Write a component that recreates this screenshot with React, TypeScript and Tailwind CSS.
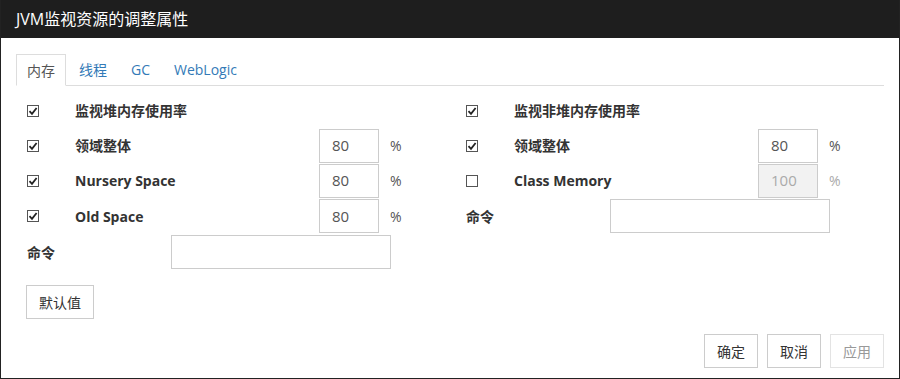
import type { ReactNode } from 'react';

const FONT = { fontFamily: '"Segoe UI", "Open Sans", "Noto Sans CJK SC", sans-serif' };

function Check({ checked }: { checked: boolean }) {
  return (
    <span className="w-[12px] h-[12px] border border-[#555] bg-white flex items-center justify-center shrink-0">
      {checked && (
        <svg width="10" height="10" viewBox="0 0 10 10">
          <path d="M1.5 5.2 L4 7.8 L8.6 2" fill="none" stroke="#222" strokeWidth="1.8" />
        </svg>
      )}
    </span>
  );
}

function NumInput({ value, disabled }: { value: string; disabled?: boolean }) {
  return (
    <div
      className={`w-[60px] h-[34px] border border-[#ccc] flex items-center pl-[12px] text-[15px] ${
        disabled ? 'bg-[#f2f2f2] text-[#aaa]' : 'bg-white text-[#555]'
      }`}
    >
      {value}
    </div>
  );
}

function Row({ h, children }: { h: string; children: ReactNode }) {
  return <div className={`flex items-center ${h}`}>{children}</div>;
}

function CheckRow({ label, checked, value, disabled, h = 'h-[35px]' }: {
  label: string; checked: boolean; value?: string; disabled?: boolean; h?: string;
}) {
  return (
    <Row h={h}>
      <div className="w-[49px] flex items-center pl-[1px]"><Check checked={checked} /></div>
      <span className="w-[244px] text-[14px] font-bold text-[#333]">{label}</span>
      {value && (
        <>
          <NumInput value={value} disabled={disabled} />
          <span className={`ml-[11px] text-[14px] ${disabled ? 'text-[#aaa]' : 'text-[#555]'}`}>%</span>
        </>
      )}
    </Row>
  );
}

function CmdRow({ h = 'h-[36px]' }: { h?: string }) {
  return (
    <Row h={h}>
      <span className="w-[145px] pl-[1px] text-[14px] font-bold text-[#333]">命令</span>
      <div className="w-[220px] h-[34px] border border-[#ccc] bg-white" />
    </Row>
  );
}

const TABS = ['内存', '线程', 'GC', 'WebLogic'];

export default function App() {
  return (
    <div className="w-[900px] h-[379px] bg-white border border-[#222] border-t-0 flex flex-col" style={FONT}>
      {/* Title bar */}
      <div className="h-[38px] bg-[#1e1e1e] text-white text-[16px] flex items-center pl-[15px] shrink-0">
        JVM监视资源的调整属性
      </div>

      <div className="flex-1 flex flex-col px-[15px] pt-[16px] pb-[10px]">
        {/* Tabs */}
        <div className="flex h-[32px] border-b border-[#ddd]">
          {TABS.map((t, i) => (
            <div
              key={t}
              className={`mr-[2px] px-[10px] flex items-center text-[14px] ${
                i === 0
                  ? 'border border-[#ddd] border-b-white bg-white text-[#555] -mb-[1px] w-[50px] justify-center'
                  : 'text-[#337ab7] border border-transparent'
              }`}
            >
              {t}
            </div>
          ))}
        </div>

        {/* Content */}
        <div className="grid grid-cols-2 pl-[10px] mt-[7px]">
          <div className="flex flex-col">
            <CheckRow label="监视堆内存使用率" checked />
            <CheckRow label="领域整体" checked value="80" />
            <CheckRow label="Nursery Space" checked value="80" />
            <CheckRow label="Old Space" checked value="80" h="h-[36px]" />
            <CmdRow />
          </div>
          <div className="flex flex-col pl-[10px]">
            <CheckRow label="监视非堆内存使用率" checked />
            <CheckRow label="领域整体" checked value="80" />
            <CheckRow label="Class Memory" checked={false} value="100" disabled />
            <CmdRow />
          </div>
        </div>

        <div className="pl-[10px] mt-[15px]">
          <button className="h-[34px] w-[68px] border border-[#ccc] bg-white text-[14px] text-[#333]">默认值</button>
        </div>

        <div className="mt-auto flex justify-end gap-[9px]">
          <button className="h-[34px] w-[54px] border border-[#ccc] bg-white text-[14px] text-[#333]">确定</button>
          <button className="h-[34px] w-[54px] border border-[#ccc] bg-white text-[14px] text-[#333]">取消</button>
          <button className="h-[34px] w-[54px] border border-[#e3e3e3] bg-white text-[14px] text-[#999]">应用</button>
        </div>
      </div>
    </div>
  );
}
